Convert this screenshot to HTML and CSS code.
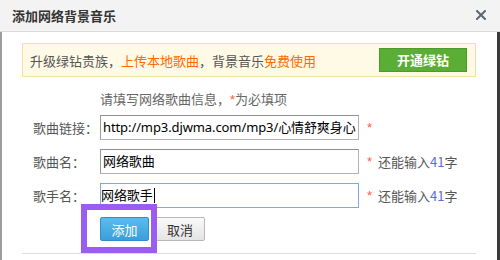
FILE: index.html
```html
<!DOCTYPE html>
<html lang="zh-CN">
<head>
    <meta charset="UTF-8">
    <meta name="viewport" content="width=device-width, initial-scale=1.0">
    <title>添加网络背景音乐</title>
    <link rel="stylesheet" href="styles.css">
</head>
<body>
    <div class="dialog">
        <div class="dialog-head">
            <h1>添加网络背景音乐</h1>
            <a class="close" href="#" title="关闭">
                <svg width="10" height="10" viewBox="0 0 10 10">
                    <path d="M1 1 L9 9 M9 1 L1 9" stroke="#5d6670" stroke-width="2" stroke-linecap="square"/>
                </svg>
            </a>
        </div>
        <div class="dialog-body">
            <div class="promo">
                <p>升级绿钻贵族，<span class="hot">上传本地歌曲</span>，背景音乐<span class="hot">免费使用</span></p>
                <a class="btn-green" href="#">开通绿钻</a>
            </div>
            <div class="form">
                <p class="tip">请填写网络歌曲信息，<span class="req">*</span>为必填项</p>
                <div class="row">
                    <label>歌曲链接：</label>
                    <div class="field">http://mp3.djwma.com/mp3/心情舒爽身心</div>
                    <span class="star">*</span>
                </div>
                <div class="row">
                    <label>歌曲名：</label>
                    <div class="field">网络歌曲</div>
                    <span class="star">*</span>
                    <span class="hint">还能输入<em>41</em>字</span>
                </div>
                <div class="row">
                    <label>歌手名：</label>
                    <div class="field focus">网络歌手<span class="caret"></span></div>
                    <span class="star">*</span>
                    <span class="hint">还能输入<em>41</em>字</span>
                </div>
                <div class="actions">
                    <button class="btn-blue">添加</button>
                    <button class="btn-gray">取消</button>
                </div>
            </div>
            <div class="sep"></div>
        </div>
        <div class="mark"></div>
    </div>
</body>
</html>
```

FILE: styles.css
```css
body {
    margin: 0;
    font-family: 'Noto Sans CJK SC', sans-serif;
    font-size: 13px;
    color: #555;
    background-color: #fff;
    overflow: hidden;
}
.dialog {
    position: relative;
    width: 500px;
    height: 260px;
    background-color: #fff;
}
.dialog-head {
    height: 31px;
    background-color: #f3f3f3;
    border-bottom: 1px solid #dcdcdc;
    display: flex;
    align-items: center;
    justify-content: space-between;
    padding: 0 14px 0 12px;
}
.dialog-head h1 {
    margin: 0;
    font-size: 13px;
    font-weight: bold;
    color: #333;
}
.close {
    display: flex;
    margin-top: -1px;
}
.dialog-body {
    height: 228px;
    border-left: 2px solid #9d9d9d;
    border-right: 3px solid #3a3a3a;
    padding: 11px 21px 0 20px;
}
.promo {
    height: 32px;
    border: 1px solid #f3e0a6;
    background-color: #fffae6;
    display: flex;
    align-items: center;
    justify-content: space-between;
    padding: 0 8px 0 7px;
}
.promo p {
    margin: 0;
    color: #555;
}
.hot {
    color: #ff6a00;
}
.btn-green {
    width: 86px;
    height: 22px;
    line-height: 22px;
    text-align: center;
    background-color: #5aae35;
    border: 1px solid #4c9a2b;
    color: #fff;
    font-weight: bold;
    font-size: 13px;
    text-decoration: none;
}
.form {
    padding-left: 11px;
}
.tip {
    margin: 13px 0 6px 67px;
    line-height: 18px;
    color: #666;
}
.req,
.star {
    color: #ff5a3c;
    font-family: 'Liberation Sans', sans-serif;
}
.star {
    margin-left: 8px;
}
.row {
    display: flex;
    align-items: center;
    height: 25px;
    margin-bottom: 9px;
}
.row label {
    width: 67px;
    color: #555;
}
.field {
    box-sizing: border-box;
    width: 259px;
    height: 25px;
    line-height: 23px;
    padding: 0 0 0 2px;
    border: 1px solid #b3b3b3;
    border-top-color: #8f8f8f;
    border-left-color: #9a9a9a;
    font-family: 'Noto Sans', 'Noto Sans CJK SC', sans-serif;
    font-size: 13px;
    letter-spacing: -0.1px;
    color: #000;
    white-space: nowrap;
    overflow: hidden;
}
.field.focus {
    border: 1px solid #7fa8e6;
    padding-left: 0;
}
.caret {
    display: inline-block;
    width: 1px;
    height: 15px;
    background-color: #000;
    vertical-align: -3px;
    margin-left: 1px;
}
.hint {
    margin-left: 6px;
    color: #555;
}
.hint em {
    font-style: normal;
    color: #5b6fd1;
}
.actions {
    display: flex;
    gap: 6px;
    margin-left: 67px;
}
.actions button {
    height: 24px;
    padding: 0;
    font-family: 'Noto Sans CJK SC', sans-serif;
    font-size: 13px;
    border-radius: 2px;
    cursor: pointer;
}
.btn-blue {
    width: 49px;
    color: #fff;
    background: linear-gradient(#5cbcec, #3a9ed9);
    border: 1px solid #2f8fcb;
}
.btn-gray {
    width: 50px;
    color: #333;
    background: linear-gradient(#fafafa, #e4e4e4);
    border: 1px solid #b8b8b8;
}
.sep {
    margin-top: 12px;
    border-top: 1px solid #dddddd;
}
.mark {
    position: absolute;
    left: 81px;
    top: 204px;
    width: 76px;
    height: 49px;
    box-sizing: border-box;
    border: 6px solid #9b5cf2;
}
```
